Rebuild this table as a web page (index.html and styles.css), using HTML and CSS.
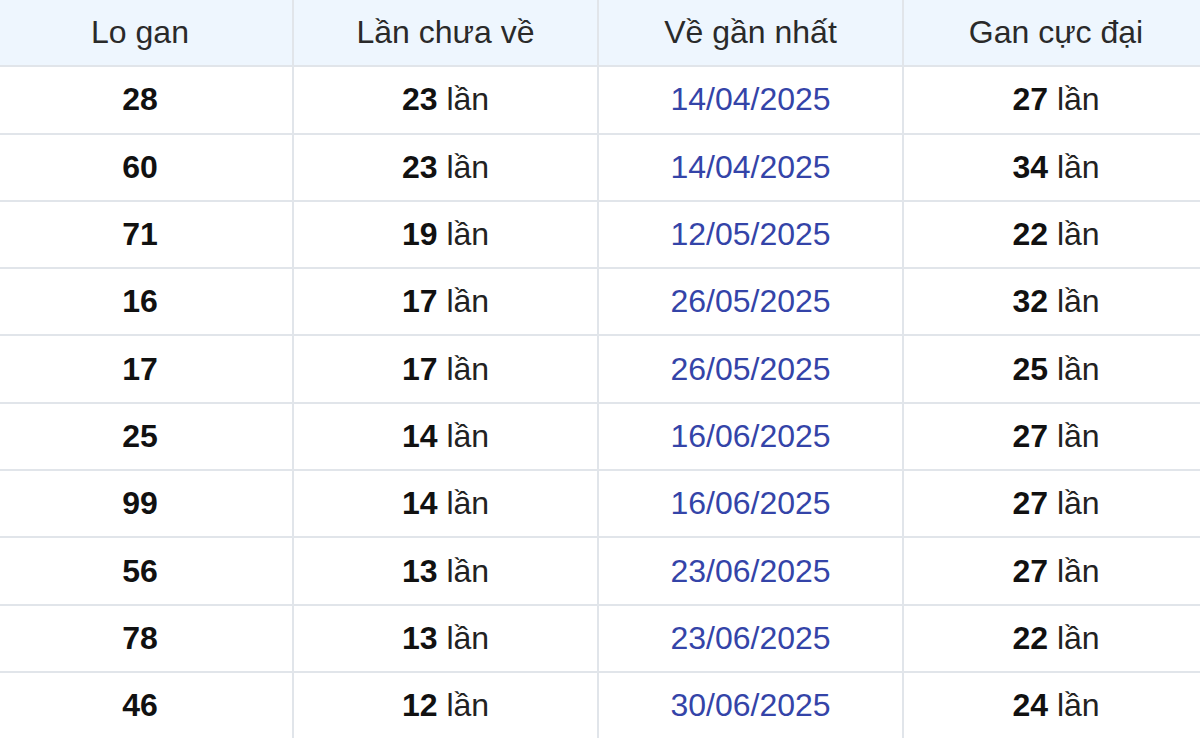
FILE: index.html
```html
<!DOCTYPE html>
<html lang="vi">
<head>
<meta charset="utf-8">
<title>Lo gan</title>
<link rel="stylesheet" href="styles.css">
</head>
<body>
<table class="gan-table">
  <thead>
    <tr><th>Lo gan</th><th>Lần chưa về</th><th>Về gần nhất</th><th>Gan cực đại</th></tr>
  </thead>
  <tbody>
    <tr><td class="num">28</td><td><b>23</b> lần</td><td class="date">14/04/2025</td><td><b>27</b> lần</td></tr>
    <tr><td class="num">60</td><td><b>23</b> lần</td><td class="date">14/04/2025</td><td><b>34</b> lần</td></tr>
    <tr><td class="num">71</td><td><b>19</b> lần</td><td class="date">12/05/2025</td><td><b>22</b> lần</td></tr>
    <tr><td class="num">16</td><td><b>17</b> lần</td><td class="date">26/05/2025</td><td><b>32</b> lần</td></tr>
    <tr><td class="num">17</td><td><b>17</b> lần</td><td class="date">26/05/2025</td><td><b>25</b> lần</td></tr>
    <tr><td class="num">25</td><td><b>14</b> lần</td><td class="date">16/06/2025</td><td><b>27</b> lần</td></tr>
    <tr><td class="num">99</td><td><b>14</b> lần</td><td class="date">16/06/2025</td><td><b>27</b> lần</td></tr>
    <tr><td class="num">56</td><td><b>13</b> lần</td><td class="date">23/06/2025</td><td><b>27</b> lần</td></tr>
    <tr><td class="num">78</td><td><b>13</b> lần</td><td class="date">23/06/2025</td><td><b>22</b> lần</td></tr>
    <tr><td class="num">46</td><td><b>12</b> lần</td><td class="date">30/06/2025</td><td><b>24</b> lần</td></tr>
  </tbody>
</table>
</body>
</html>
```

FILE: styles.css
```css
html, body {
  margin: 0;
  padding: 0;
  background: #ffffff;
  overflow: hidden;
}
body {
  font-family: "Liberation Sans", Arial, sans-serif;
  color: #222222;
}
.gan-table {
  width: 1220px;
  margin-left: -12px;
  border-collapse: collapse;
  table-layout: fixed;
  font-size: 32px;
}
.gan-table th,
.gan-table td {
  height: 65.3px;
  padding: 0;
  text-align: center;
  vertical-align: middle;
  border-left: 2px solid #e1e5ea;
  border-bottom: 2px solid #e1e5ea;
}
.gan-table tr > :first-child {
  border-left: none;
}
.gan-table tbody tr:last-child td {
  border-bottom: none;
}
.gan-table th {
  font-weight: normal;
  background: #eef6fe;
  color: #2a2a2a;
}
.gan-table td b,
.gan-table td.num {
  font-weight: bold;
  color: #111111;
}
.gan-table td.date {
  color: #3444a8;
}
```
